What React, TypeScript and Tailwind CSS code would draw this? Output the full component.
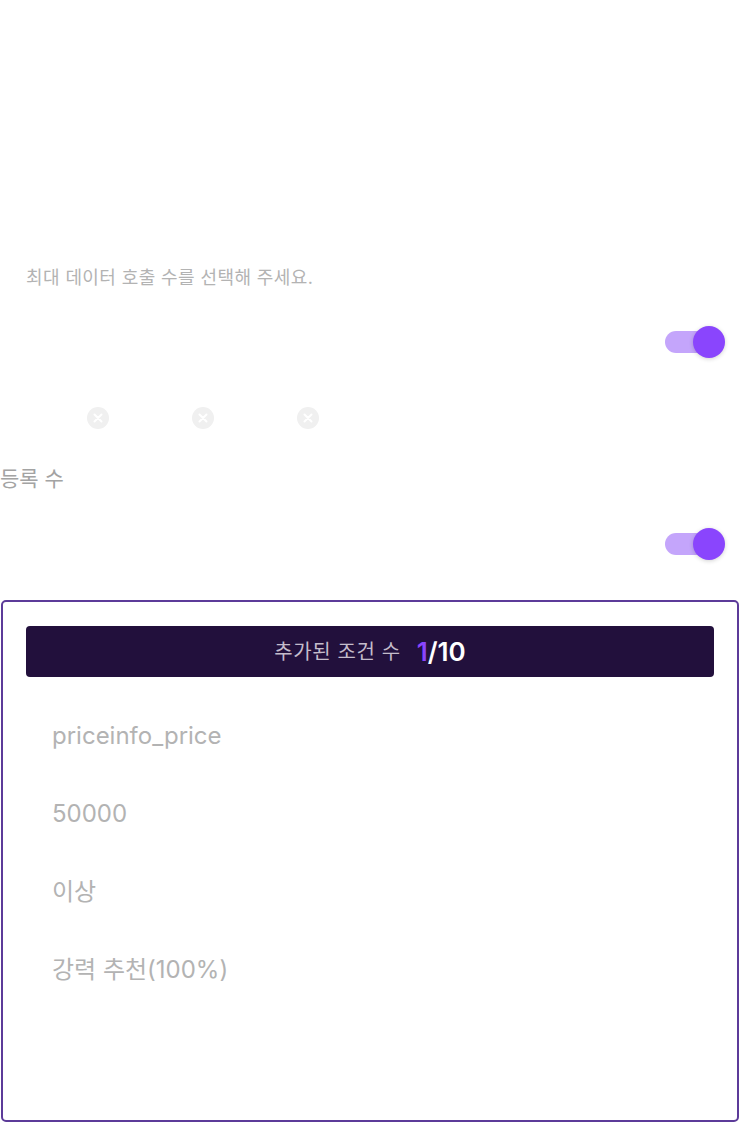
import React from 'react';

const font = { fontFamily: 'Inter, "Noto Sans CJK KR", sans-serif' };

function Toggle() {
  return (
    <div className="relative h-[32px] w-[60px]">
      <div className="absolute left-0 top-[5px] h-[22px] w-[44px] rounded-full bg-[#c4a5fb]" />
      <div className="absolute right-0 top-0 h-[32px] w-[32px] rounded-full bg-[#8a45fd] shadow-[0_1px_4px_rgba(0,0,0,0.18)]" />
    </div>
  );
}

function ClearDot() {
  return (
    <svg width="22" height="22" viewBox="0 0 22 22">
      <circle cx="11" cy="11" r="11" fill="#f0f0f0" />
      <path d="M7.5 7.5 L14.5 14.5 M14.5 7.5 L7.5 14.5" stroke="#ffffff" strokeWidth="2" strokeLinecap="round" />
    </svg>
  );
}

export default function App() {
  const fields = ['priceinfo_price', '50000', '이상', '강력 추천(100%)'];
  return (
    <div className="min-h-[1142px] w-[740px] bg-white" style={font}>
      <div className="h-[265px]" />
      <p className="pl-[26px] text-[18px] leading-[26px] tracking-[0.4px] text-[#b3b3b3]">최대 데이터 호출 수를 선택해 주세요.</p>

      <div className="mt-[35px] flex justify-end pr-[15px]">
        <Toggle />
      </div>

      <div className="mt-[49px] flex gap-[83px] pl-[87px]">
        <ClearDot />
        <ClearDot />
        <ClearDot />
      </div>

      <p className="mt-[36px] text-[21px] leading-[28px] text-[#a3a3a3]">등록 수</p>

      <div className="mt-[35px] flex justify-end pr-[15px]">
        <Toggle />
      </div>

      <div className="ml-[1px] mt-[40px] h-[522px] w-[738px] rounded-[5px] border-2 border-[#5c3b99] px-[23px] pt-[24px]">
        <div className="flex h-[51px] items-center justify-center rounded-[4px] bg-[#22103c]">
          <span className="text-[20px] tracking-[0.6px] text-[#c4bccb]">추가된 조건 수</span>
          <span className="ml-[16px] text-[26px] font-semibold text-[#8a45fd]">1</span>
          <span className="text-[26px] font-semibold text-white">/10</span>
        </div>
        <div className="mt-[43px] flex flex-col gap-[46px] pl-[26px]">
          {fields.map((f) => (
            <p key={f} className="text-[24px] leading-[32px] text-[#b3b3b3]">{f}</p>
          ))}
        </div>
      </div>
    </div>
  );
}
